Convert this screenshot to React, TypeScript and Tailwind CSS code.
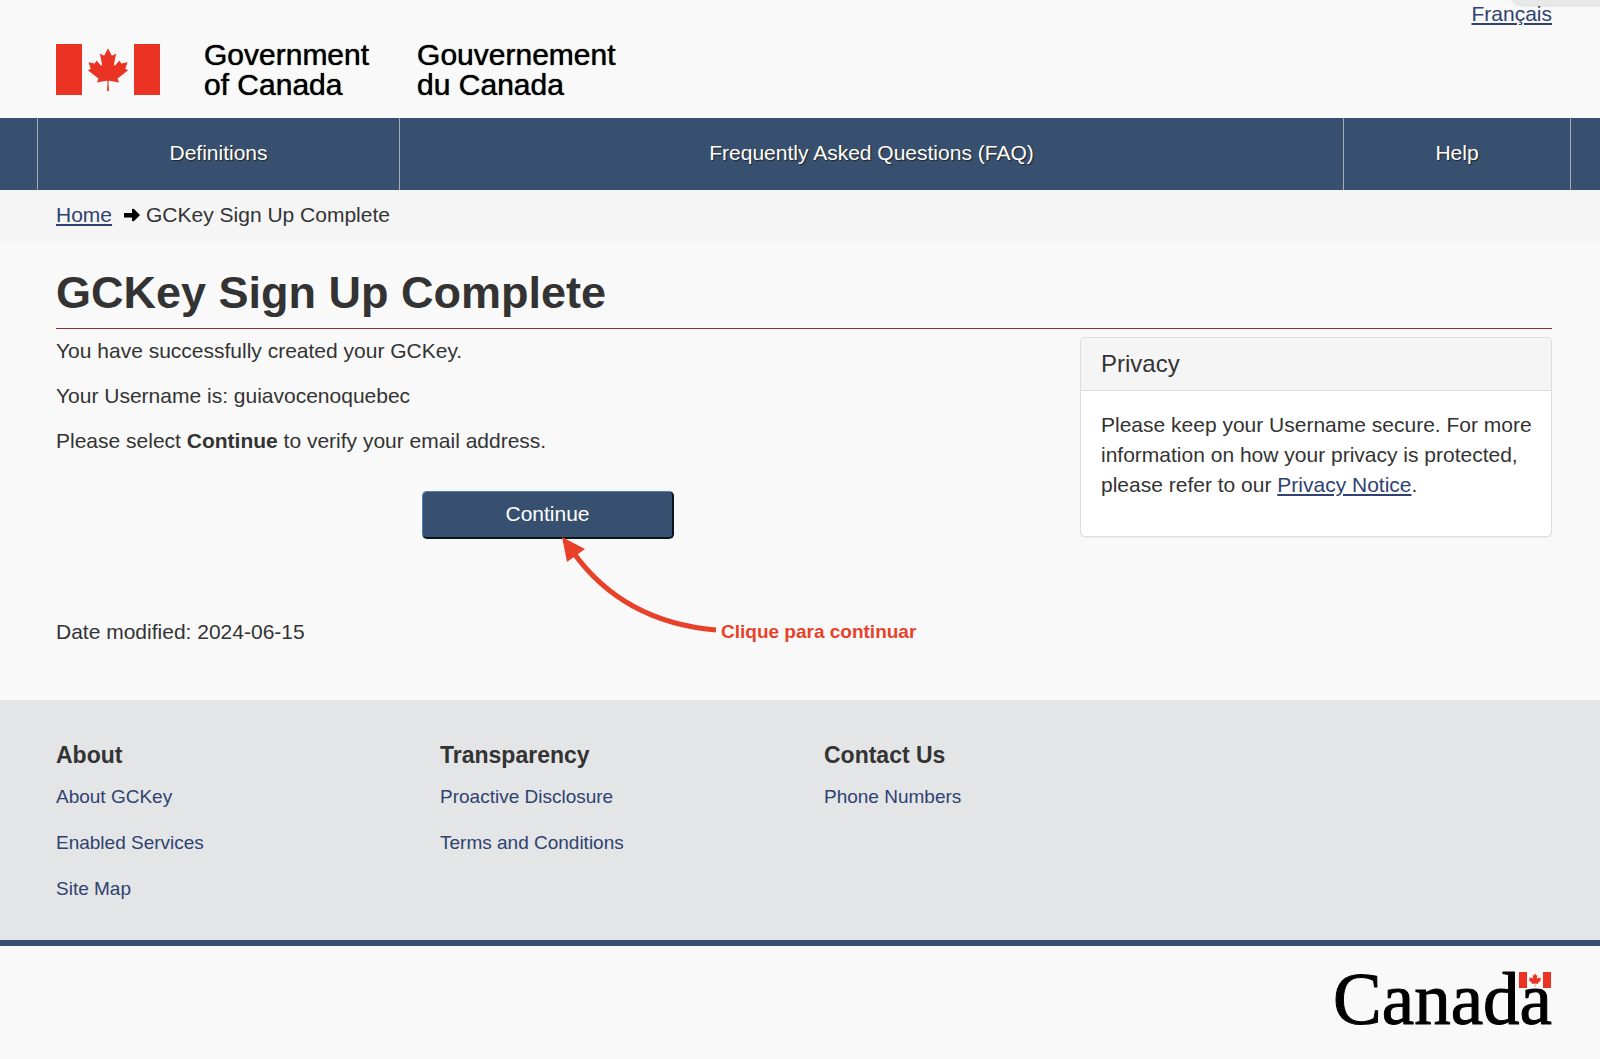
import { useState } from "react";

const navItems = ["Definitions", "Frequently Asked Questions (FAQ)", "Help"];

const footerColumns = [
  { title: "About", links: ["About GCKey", "Enabled Services", "Site Map"] },
  { title: "Transparency", links: ["Proactive Disclosure", "Terms and Conditions"] },
  { title: "Contact Us", links: ["Phone Numbers"] },
];

function Flag({ className }: { className: string }) {
  return (
    <svg viewBox="0 0 9600 4800" preserveAspectRatio="none" className={className} role="img" aria-label="Canada">
      <path fill="#eb3323" d="M0 0h2400v4800H0zM7200 0h2400v4800H7200z" />
      <path
        fill="#eb3323"
        d="m4890 4430-45-863a95 95 0 0 1 111-98l859 151-116-320a65 65 0 0 1 20-73l941-762-212-99a65 65 0 0 1-34-79l186-572-542 115a65 65 0 0 1-73-38l-105-247-423 454a65 65 0 0 1-111-57l204-1052-327 189a65 65 0 0 1-91-27l-332-652-332 652a65 65 0 0 1-91 27l-327-189 204 1052a65 65 0 0 1-111 57l-423-454-105 247a65 65 0 0 1-73 38l-542-115 186 572a65 65 0 0 1-34 79l-212 99 941 762a65 65 0 0 1 20 73l-116 320 859-151a95 95 0 0 1 111 98l-45 863z"
      />
    </svg>
  );
}

function Header() {
  return (
    <header className="ml-9 mr-7 flex h-[118px] items-start justify-between px-5">
      <div className="flex items-start pt-11">
        <Flag className="h-[51px] w-[104px]" />
        <p className="ml-11 -mt-1 text-[30px] leading-[30px] text-black [text-shadow:0_0_1px_#000]">
          Government
          <br />
          of Canada
        </p>
        <p className="ml-12 -mt-1 text-[30px] leading-[30px] text-black [text-shadow:0_0_1px_#000]">
          Gouvernement
          <br />
          du Canada
        </p>
      </div>
      <a href="#fr" lang="fr" className="leading-7 text-[#2f4270] underline underline-offset-2">
        Français
      </a>
    </header>
  );
}

function Nav() {
  return (
    <nav className="bg-[#38506f]">
      <ul className="ml-[37px] mr-[29px] grid grid-cols-[362fr_944fr_227fr] border-l border-[#a5adb8]">
        {navItems.map((item) => (
          <li key={item} className="border-r border-[#a5adb8]">
            <a
              href="#nav"
              className="block h-[72px] text-center leading-[70px] text-white [text-shadow:1px_1px_1px_#222]"
            >
              {item}
            </a>
          </li>
        ))}
      </ul>
    </nav>
  );
}

function Breadcrumb() {
  return (
    <div className="bg-[#f5f5f5]">
      <ol className="ml-9 mr-7 flex h-[52px] items-center px-5 pb-0.5">
        <li>
          <a href="#home" className="text-[#2f4270] underline underline-offset-2">
            Home
          </a>
        </li>
        <li className="flex items-center">
          <svg viewBox="0 0 16 14" className="ml-3 mr-1.5 h-3.5 w-4" aria-hidden="true">
            <path fill="#000" d="M0 5h8V2q0-2 2-1l6 6-6 6q-2 1-2-1V9.500H0z" />
          </svg>
          GCKey Sign Up Complete
        </li>
      </ol>
    </div>
  );
}

function ContinueButton() {
  const [pressed, setPressed] = useState(false);
  return (
    <div className="relative mx-auto mt-[35px] w-[252px]">
      <button
        type="button"
        aria-pressed={pressed}
        onClick={() => setPressed(true)}
        className="block h-12 w-full cursor-pointer rounded-[5px] border border-r-2 border-b-2 border-t-[#4a7fb8] border-l-[#4a7fb8] border-r-[#0c1420] border-b-[#0c1420] bg-[#38506f] pb-0.5 text-white"
      >
        Continue
      </button>
      <div className="pointer-events-none absolute top-[46px] left-[140px] flex items-end text-[#e8412a]">
        <svg viewBox="0 0 155 96" className="mb-2.5 h-24 w-[155px] shrink-0" aria-hidden="true">
          <path d="M0 0 23 12 5 25z" fill="currentColor" />
          <path d="M11 15Q61 85 154 93" fill="none" stroke="currentColor" strokeWidth="5" />
        </svg>
        <span className="ml-1 pb-px text-[19px] leading-5 font-bold whitespace-nowrap">Clique para continuar</span>
      </div>
    </div>
  );
}

function Privacy() {
  return (
    <section className="min-h-[200px] rounded-[5px] border border-[#ddd] bg-white shadow-xs">
      <h2 className="rounded-t-[5px] border-b border-[#ddd] bg-[#f5f5f5] px-5 py-[11px] text-2xl leading-[30px]">
        Privacy
      </h2>
      <p className="pt-[19px] pr-3 pl-5 leading-[30px]">
        Please keep your Username secure. For more information on how your privacy is protected, please refer to our{" "}
        <a href="#privacy" className="text-[#2f4270] underline underline-offset-2">
          Privacy Notice
        </a>
        .
      </p>
    </section>
  );
}

function Footer() {
  return (
    <footer>
      <div className="border-b-[6px] border-[#38506f] bg-[#e3e5e7]">
        <div className="ml-9 mr-7 grid h-[240px] grid-cols-4 pt-10">
          {footerColumns.map((column) => (
            <section key={column.title} className="px-5">
              <h3 className="text-[23px] leading-[30px] font-bold">{column.title}</h3>
              <ul className="mt-[13px] space-y-[18px] text-[19px] leading-7 text-[#2f4270]">
                {column.links.map((link) => (
                  <li key={link}>
                    <a href="#footer">{link}</a>
                  </li>
                ))}
              </ul>
            </section>
          ))}
        </div>
      </div>
      <div className="ml-9 mr-7 flex justify-end px-5 pt-[22px] pb-6">
        <div className="relative font-['Liberation_Serif',serif] text-[73px] leading-[64px] text-black [-webkit-text-stroke:1px_#000]">
          Canada
          <Flag className="absolute top-1 right-px h-4 w-8" />
        </div>
      </div>
    </footer>
  );
}

export default function App() {
  return (
    <div className="relative min-h-screen overflow-hidden bg-[#f9f9f9] font-['Liberation_Sans',Arial,sans-serif] text-[21px] text-[#333]">
      <Header />
      <div className="absolute -top-6 -right-6 h-[29px] w-[116px] rounded-bl-2xl bg-[#e8e8e8] shadow" />
      <Nav />
      <Breadcrumb />
      <main className="ml-9 mr-7">
        <h1 className="mx-5 border-b border-[#8c2e33] pt-[23px] pb-[7px] text-[45px] leading-[56px] font-bold">
          GCKey Sign Up Complete
        </h1>
        <div className="grid grid-cols-3">
          <div className="col-span-2 px-5 pt-[7px] leading-[30px]">
            <p>You have successfully created your GCKey.</p>
            <p className="mt-[15px]">Your Username is: guiavocenoquebec</p>
            <p className="mt-[15px]">
              Please select <strong>Continue</strong> to verify your email address.
            </p>
            <ContinueButton />
          </div>
          <div className="px-5 pt-2">
            <Privacy />
          </div>
        </div>
        <p className="px-5 pt-[78px] pb-[53px] leading-[30px]">Date modified: 2024-06-15</p>
      </main>
      <Footer />
    </div>
  );
}
